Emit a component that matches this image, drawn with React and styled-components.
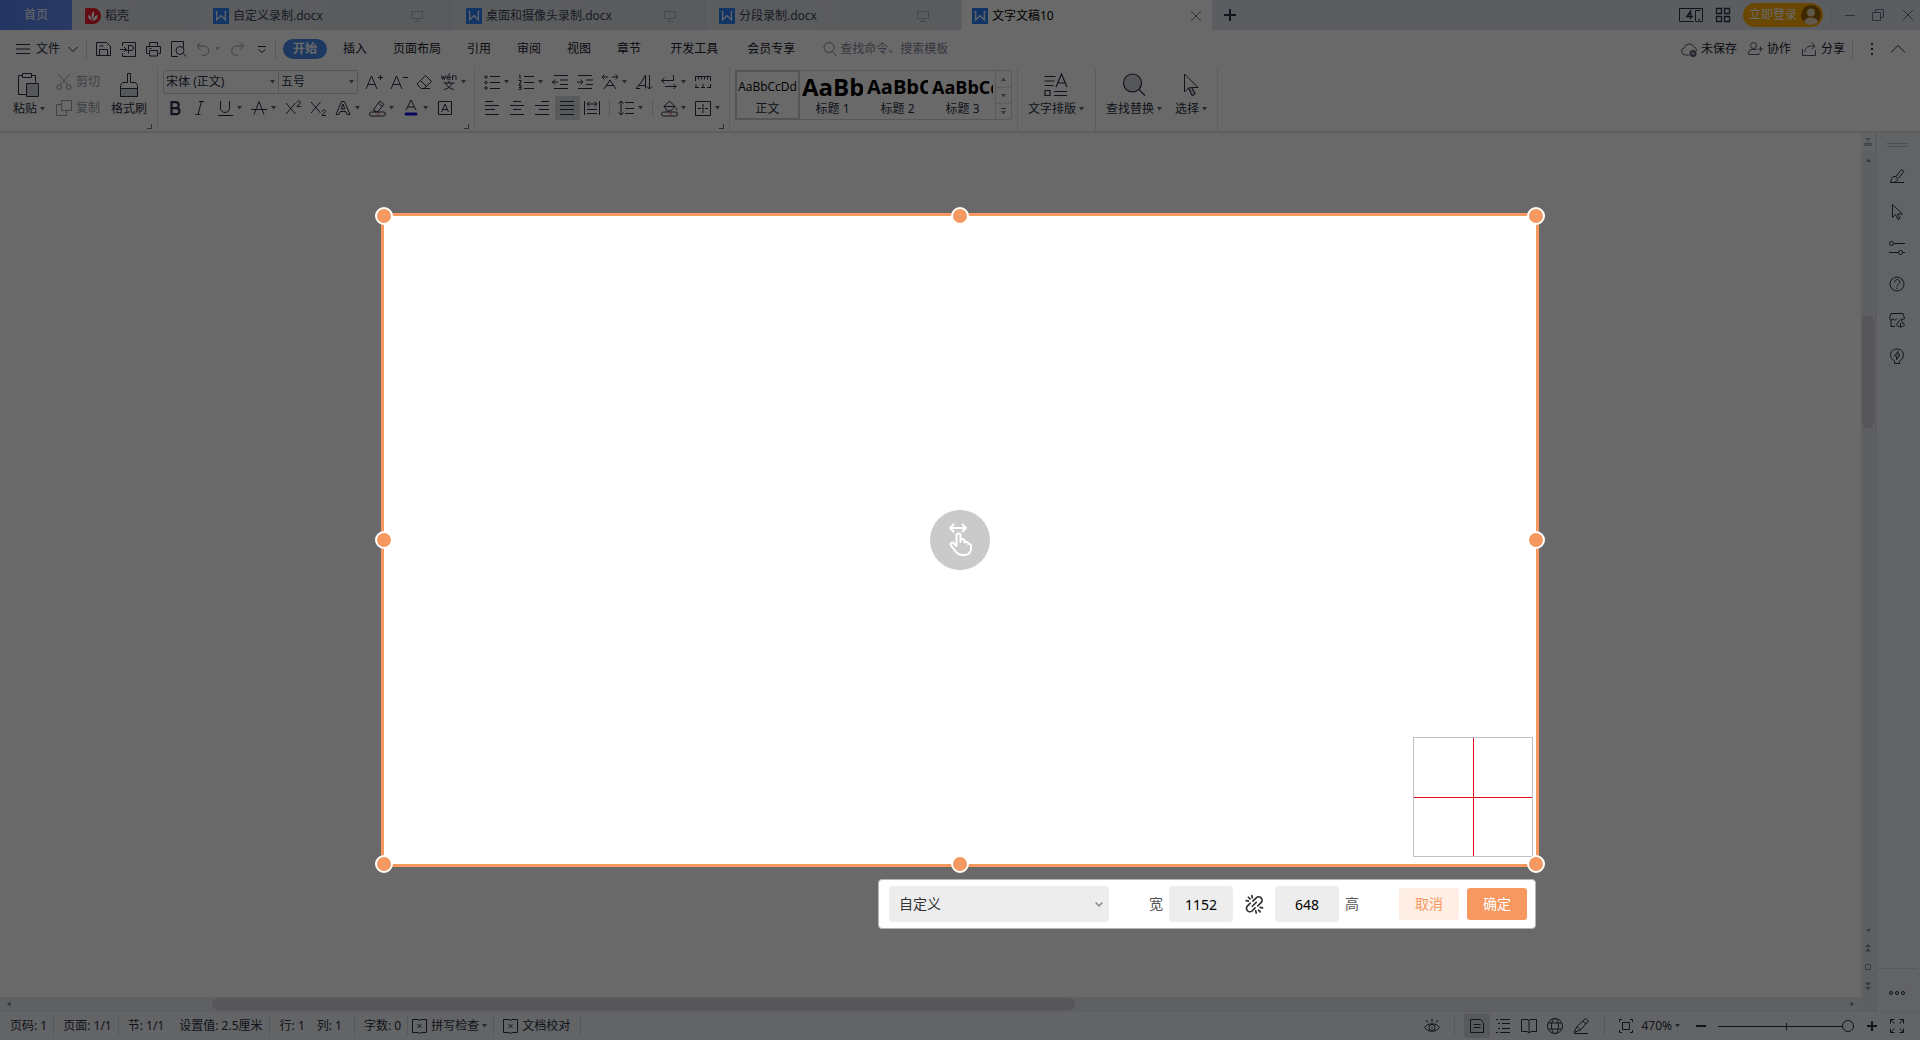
import React, { useState } from "react";
import styled, { createGlobalStyle, css } from "styled-components";

const ink = "#2b3145";
const faint = "#9a9ea8";
const accent = "#f79860";

const GlobalStyle = createGlobalStyle`
  *, *::before, *::after { box-sizing: border-box; }
  html, body, #root { height: 100%; }
  body { margin: 0; overflow: hidden; background: #fff; }
  body, button, input, select {
    font-family: "Noto Sans", "Noto Sans CJK SC", sans-serif;
    font-size: 12px;
    line-height: 16px;
    color: ${ink};
  }
  button { border: 0; padding: 0; margin: 0; background: none; white-space: nowrap; }
`;

/* ---------- icons ---------- */

const Svg = styled.svg`
  display: block;
  flex: none;
  overflow: visible;
  fill: none;
  stroke: currentColor;
  stroke-width: ${(p) => p.$weight || 1};
  stroke-linecap: butt;
  .solid { fill: currentColor; stroke: none; }
  .tint { fill: #cfd3da; }
`;

const shapes = {
  menu: <path d="M1 3.5h14M1 8h14M1 12.5h14" />,
  chevronDown: <path d="M3.5 6 8 10.5 12.5 6" />,
  chevronUp: <path d="M1 11.5 8 4.5 15 11.5" />,
  save: <path d="M1.5 1.5h10l4 4v9h-14zM4.500 14.500v-6h8v6M4.500 5h4" />,
  exportPdf: <path d="M2.500 5V1.500h13v14h-13V12M0 8.500h6M4 6l2.500 2.500L4 11M8.500 12.500V4.500H11a2.500 2.500 0 0 1 0 5H6.500" />,
  print: <path d="M4.500 5V1.500h8V5M3.500 12.500h-2v-7h14v7h-2M4.500 9.500h8v5.500h-8zM4.500 7.500h2" />,
  preview: <path d="M8 15.500H1.500v-15h12v6M13.500 12.500l2.500 3M14 9.500a4 4 0 1 1-8 0 4 4 0 0 1 8 0z" />,
  undo: <path d="M5.500 1.500 2 5l3.500 3.500M2 5h7a4.700 4.700 0 0 1 0 9.500H7" />,
  redo: <path d="M11 1.500 14.500 5 11 8.500M14.500 5h-7a4.700 4.700 0 0 0 0 9.500H9" />,
  more: <path d="M4 5.500h8M4.500 8.500 8 11.500l3.500-3" />,
  search: <path d="M12 6.500a5 5 0 1 1-10 0 5 5 0 0 1 10 0zM10.500 10.500l4.500 5" />,
  cloud: (
    <>
      <path d="M8 14H4.500A3.700 3.700 0 0 1 3.500 6.700 5 5 0 0 1 13 6a3.500 3.500 0 0 1 2.500 4" />
      <circle className="solid" cx="12" cy="12.500" r="3.500" />
      <path stroke="#fff" d="m10.700 11.200 2.600 2.600m0-2.600-2.600 2.600" />
    </>
  ),
  person: <path d="M9.500 4.500a3 3 0 1 1-6 0 3 3 0 0 1 6 0zM10 8.500H5a3.500 3.500 0 0 0-3.500 3.500v1.500H12V12M11 8h5M13.500 5.500v5" />,
  share: <path d="M1.500 8v6.500h13V9M4 11c0-4 2.500-6 7-6h2.500M10.500 1.500 14 5l-3.500 3.500" />,
  dots: <path className="solid" d="M7 2h2v2H7zM7 7h2v2H7zM7 12h2v2H7z" />,
  cut: <path d="M2.500.500 12 11M13.500.500 4 11M5.500 13a2.300 2.300 0 1 1-4.600 0 2.300 2.300 0 0 1 4.600 0zM15 13a2.300 2.300 0 1 1-4.600 0 2.300 2.300 0 0 1 4.600 0z" />,
  copy: <path d="M5.500.500h10v10h-10zM5.500 4.500h-5v11h10v-5" />,
  fontUp: <path d="M0 15 5.500 2 11 15M2 10.500h7M12 3.500h5M14.500 1v5" />,
  fontDown: <path d="M0 15 5.500 2 11 15M2 10.500h7M12 3.500h5" />,
  eraser: <path d="M1 10 9.500 1.500l6 6L8 14.500H5zM4.500 6.500l6 6M5 14.500h9" />,
  bold: <path strokeWidth="2.200" d="M4.500 2.200h4.200a3 3 0 0 1 0 6H4.500zM4.500 8.200h5a3 3 0 0 1 0 6h-5z" />,
  italic: <path d="M7 1.500h5M3.500 14.500h5M9.500 1.500 6 14.500" />,
  underline: <path d="M3.500 1v7a4.500 4.500 0 0 0 9 0V1M1 15.500h15" />,
  strike: <path d="M3 14.500 8 1.500l5 13M0 9.500h16" />,
  superscript: <path d="M1 3l9.500 11M10.500 3 1 14M12 2.500c0-2 3.500-2 3.500 0 0 1.500-3.500 2-3.500 4h4" />,
  subscript: <path d="M1 2l9.500 11M10.500 2 1 13M12 11.500c0-2 3.500-2 3.500 0 0 1.500-3.500 2-3.500 4h4" />,
  outlineA: <path d="M1 14.500 6.500 1.500h3L15 14.500h-3l-1.200-3H5.200l-1.200 3zM6.200 9l1.800-5 1.800 5z" />,
  highlighter: (
    <>
      <path d="M4.500 9.500 11 1l4 3.500-6.500 7.500H6zM9.500 3l4 3.500M7 11.500l-2-2" />
      <path d="M2.500 12h12a2 2 0 0 1 0 4h-12a2 2 0 0 1 0-4z" />
      <path stroke="#e0504a" d="m8 15.500 3-3.500" />
    </>
  ),
  fontColor: (
    <>
      <path d="M3 10 8 0l5 10M4.700 7h6.600" />
      <path stroke="#1313e8" strokeWidth="3" strokeLinecap="round" d="M3 14h10" />
    </>
  ),
  boxedA: <path d="M1.500 1.500h13v13h-13zM4.500 12 8 4l3.500 8M5.500 9.500h5" />,
  bullets: <path d="M6 2.500h10M6 8.500h10M6 14.500h10M3.200 3a1.200 1.200 0 1 1-2.400 0 1.200 1.200 0 0 1 2.400 0zM3.200 8.500a1.200 1.200 0 1 1-2.400 0 1.200 1.200 0 0 1 2.400 0zM3.200 14a1.200 1.200 0 1 1-2.400 0 1.200 1.200 0 0 1 2.400 0z" />,
  numbers: <path d="M6 2.500h10M6 8.500h10M6 14.500h10M1 1h1v4M.500 6.500H3v1.700L1 10h2M.500 11.500H3v4H.500M1 13.500h2" />,
  outdent: <path d="M2 1.500h14M8 6h8M8 10.500h8M2 14.500h14M0 8h6M3 5.500.500 8 3 10.500" />,
  indent: <path d="M1 1.500h14M9 6h7M9 10.500h7M1 14.500h14M0 8h6M3.500 5.500 6 8l-2.500 2.500" />,
  textScale: <path d="M0 3h6M10 3h6M2.500.500 0 3l2.500 2.500M13.500.500 16 3l-2.500 2.500M2 15l6-9 6 9M4.500 11.500h7" />,
  sort: <path d="M0 14.500 5.500 8 9.500 1v13.500M3 11.500h6.500M0 14.500h4M13.500 1v14M11 12.500l2.500 2.500 2.500-2.500" />,
  wrapMark: <path d="M12.500 1v5.500H1M3.500 3.500.500 6.500l3 3M4 12.500h11M12.500 10l2.500 2.500L12.500 15" />,
  tabRuler: <path d="M.500 7V2.500h15V7M3.500 2.500v3M6.500 2.500v3M9.500 2.500v3M12.500 2.500v3M1 14V10.500M0 13.500h4M6 13.500h4M8 10v3.500M12 13.500h4M15.500 10v3.500" />,
  alignLeft: <path d="M1 1.500h8M1 5.500h14M1 9.500h10M1 14.500h14" />,
  alignCenter: <path d="M4 1.500h8M1 5.500h14M4 9.500h8M1 14.500h14" />,
  alignRight: <path d="M7 1.500h8M1 5.500h14M5 9.500h10M1 14.500h14" />,
  justify: <path d="M1 1.500h14M1 5.500h14M1 9.500h14M1 14.500h14" />,
  distribute: <path d="M.500 1v14M15.500 1v14M3 4h10M5.500 1.500 3 4l2.500 2.500M10.500 1.500 13 4l-2.500 2.500M3 9.500h10M3 13.500h10" />,
  lineSpacing: <path d="M7 2.500h9M7 8.500h9M7 13.500h9M3 1v14M.500 3.500 3 1l2.500 2.500M.500 12.500 3 15l2.500-2.500" />,
  fill: (
    <>
      <path d="M3 6.500 8.500 1l5.500 5.500-4.500 4.500h-3zM3 6.500h11M15 7.500c1 2 1 2.500 0 3" />
      <path d="M2.500 12h12a2 2 0 0 1 0 4h-12a2 2 0 0 1 0-4z" />
      <path stroke="#e0504a" d="m8 15.500 3-3.500" />
    </>
  ),
  border: <path d="M.500 1.500h15v14H.500zM8 4v3M8 10v3M3 8.500h3M10 8.500h3M7 8.500h2M8 7.500v2" />,
  grid: <path strokeWidth="1.300" d="M1.500 1.500h5v5h-5zM9.500 1.500h5v5h-5zM1.500 9.500h5v5h-5zM9.500 9.500h5v5h-5z" />,
  minimize: <path d="M3 8.500h10" />,
  restore: <path d="M2.500 5.500h8v8h-8zM5.500 5V2.500h8v8H11" />,
  close: <path d="m3 3 10 10M13 3 3 13" />,
  plus: <path strokeWidth="2" d="M2 8h12M8 2v12" />,
  minus: <path strokeWidth="2" d="M3 8h10" />,
  plusSmall: <path strokeWidth="2" d="M3 8h10M8 3v10" />,
  monitor: <path d="M2.500 3.500h11v7h-11zM8 10.500v3M5 13.500h6" />,
  brush: <path d="M7 8.500 12.500 1.500l2.500 2L9.500 10M1 14.500c2-1 .500-5.500 4-6 3-.300 4.500 2.500 2.500 4.500s-4 1.500-6.500 1.500h14" />,
  cursor: <path d="M3.500.500v13l3-3 2.500 5 2-1-2.500-4.500h5z" />,
  sliders: <path d="M5 3.500h11M0 12.500h9M13.500 12.500H16M4.500 3.500a2 2 0 1 1-4 0 2 2 0 0 1 4 0zM13.500 12.500a2 2 0 1 1-4 0 2 2 0 0 1 4 0z" />,
  help: <path d="M15 8A7 7 0 1 1 1 8a7 7 0 0 1 14 0zM5.500 6.500C5.500 2.500 11 3 11 6c0 2-3 2-3 4.500M8 11.500v1.500" />,
  shop: <path d="M6 14.500H2V7M.500 6.500 2 1.500h12l1.500 5c0 1-2.500 1.500-3 0M.500 6.500c0 2 3 2 3.500 0 .500 2 3 2 4 0M13 6.500v1M11.500 15c-6-1-4-4-2.500-3.500 0-2 1.500-3 2.500-4 1 1 2 2 2 4 2.500-.500 3.500 2.500-2 3.500zM11.500 15v-4" />,
  idea: <path d="M5.500 15.500h5V13C17 9.500 15 1 8 1S-1 9.500 5.500 13zM9 3.500 5.500 8h2v3.500L11 7H9z" />,
  ellipsis: <path d="M3.500 8a1.500 1.500 0 1 1-3 0 1.500 1.500 0 0 1 3 0zM9.500 8a1.500 1.500 0 1 1-3 0 1.500 1.500 0 0 1 3 0zM15.500 8a1.500 1.500 0 1 1-3 0 1.500 1.500 0 0 1 3 0z" />,
  spell: <path d="M6 1.500H.500v13H6l1.500 1 1.500-1h5.500v-13H9l-1.500 1zM5.500 6l4 4M9.500 6l-4 4" />,
  eye: <path d="M.500 9.500C4 4.500 12 4.500 15.500 9.500 12 14.500 4 14.500.500 9.500zM11 9.500a3 3 0 1 1-6 0 3 3 0 0 1 6 0zM8.500 9.500a.500.500 0 1 1-1 0M8 1v3M2 2l2 2.500M14 2l-2 2.500" />,
  pageView: <path d="M1.500 1.500h10l3 3v10h-13zM4.500 6.500h7M4.500 9.500h7" />,
  outlineView: <path d="M1 1.500h2M5 1.500h10M3 5.500h2M7 5.500h8M3 10.500h2M7 10.500h8M1 14.500h2M5 14.500h10" />,
  bookView: <path d="M8 3 7 1.500H.500v12H6l2 1.500 2-1.500h5.500v-12H9zM8 3v12" />,
  globe: <path d="M15.500 8A7.500 7.500 0 1 1 .500 8a7.500 7.500 0 0 1 15 0zM11.500 8c0 4-1.500 7.500-3.500 7.500S4.500 12 4.500 8 6 .500 8 .500s3.500 3.500 3.500 7.500zM1.500 5h13M1.500 11h13" />,
  pen: <path d="M1 14.500 4 8.500 12.500.500l3 2.500-8 9zM4 8.500l3.500 3.500M1 15.500h14M10 3l3 3" />,
  fit: <path d="M4.500 4.500h7v7h-7zM1.500 4V1.500H4M12 1.500h2.500V4M14.500 12v2.500H12M4 14.500H1.500V12" />,
  fullscreen: <path d="M1.500 5.500v-4h4M1.500 1.500l4 4M10.500 1.500h4v4M14.500 1.500l-4 4M14.500 10.500v4h-4M14.500 14.500l-4-4M5.500 14.500h-4v-4M1.500 14.500l4-4" />,
  unlink: <path strokeWidth="1.500" strokeLinecap="round" d="M7 5.500 10 2.500a3 3 0 0 1 4.300 4.300l-3 3M9 11.500l-2.500 2.500a3 3 0 0 1-4.300-4.300l2.500-2.500M6.500 10l3.500-3.500M1 5l2 .500M3 2l1.500 1.500M6 .500l.500 2M15.500 11.500l-2-.500M13.500 15 12 13.500M10 16l-.500-2" />,
};

const Icon = ({ name, size = 16, weight }) => (
  <Svg width={size} height={size} viewBox="0 0 16 16" $weight={weight} aria-hidden="true">
    {shapes[name]}
  </Svg>
);

const turns = { down: 0, up: 180, left: 90, right: 270 };

const ArrowSvg = styled(Svg)`
  transform: rotate(${(p) => turns[p.$dir]}deg);
`;

const Arrow = ({ dir = "down" }) => (
  <ArrowSvg width="5" height="4" viewBox="0 0 5 4" $dir={dir} aria-hidden="true">
    <path className="solid" fillOpacity=".75" d="M0 0h5L2.500 3.500z" />
  </ArrowSvg>
);

const PinyinIcon = () => (
  <Svg width="16" height="16" viewBox="0 0 16 16" aria-hidden="true">
    <path d="M.500 1.500l1 4 1-3 1 3 1-4M6 3.500h3.500c0-2.500-3.500-2.500-3.500 0s2 2.500 3.500 1.500M7.500.500l1.500-1M11.500 6V1.500M11.500 3c1-2 3.500-2 3.500 0v3M2.500 9h11M8 7v2M4.500 9c2 4 5 6 8.500 6.500M11.500 9c-2 4-5 6-8.500 6.500" />
  </Svg>
);

const PasteIcon = () => (
  <Svg width="22" height="24" viewBox="0 0 22 24" aria-hidden="true">
    <path d="M8.500 21.500h-8v-19h4M13.500 2.500h4v7M4.500.500h9v4h-9z" />
    <path className="tint" d="M8.500 10.500h12v13h-12z" />
  </Svg>
);

const PainterIcon = () => (
  <Svg width="20" height="24" viewBox="0 0 20 24" aria-hidden="true">
    <path d="M8.500.500h3v9h5l2 3v11h-17v-11l2-3h5z" />
    <path className="tint" d="M1.500 15.500h17v8h-17z" />
  </Svg>
);

const LayoutIcon = () => (
  <Svg width="24" height="24" viewBox="0 0 24 24" $weight={1.2} aria-hidden="true">
    <path d="M.500 3.500h11M.500 8h10M.500 12.500h9M12 14 17.500 1 23 14M14 10h7M1 17.500h5v5H1zM10 18.500h13M10 22.500h13" />
  </Svg>
);

const FindIcon = () => (
  <Svg width="24" height="24" viewBox="0 0 24 24" $weight={1.2} aria-hidden="true">
    <path className="tint" d="M19.500 10a9 9 0 1 1-18 0 9 9 0 0 1 18 0z" />
    <path d="m17 16.500 6 6" />
  </Svg>
);

const PointerIcon = () => (
  <Svg width="24" height="24" viewBox="0 0 24 24" aria-hidden="true">
    <path d="M5.500 1v18l4-4 3.500 7.500 3-1.500-3-6.500h6z" />
    <path className="tint" d="m9.500 15 3.500 7.500 3-1.500-3-6.500z" />
  </Svg>
);

const WriterLogo = () => (
  <Svg width="16" height="16" viewBox="0 0 16 16" aria-hidden="true">
    <path fill="#2f80f5" stroke="none" d="M0 0h16v16H0z" />
    <path stroke="#fff" strokeWidth="1.200" d="M2.500 3.500h1.200v8.300L8 7.500l4.300 4.300V3.500h1.200" />
  </Svg>
);

const DocerLogo = () => (
  <Svg width="16" height="16" viewBox="0 0 16 16" aria-hidden="true">
    <path fill="#ee1c2e" stroke="none" d="M0 1.500A1.500 1.500 0 0 1 1.500 0H8a7.500 7.500 0 0 1 0 16H1.500A1.500 1.500 0 0 1 0 14.500z" />
    <path fill="#fff" stroke="none" d="M6.500 12.500C4 11.500 2.800 9.500 3 7c2.500.500 3.500 2.500 3.500 5.500zM7 11C6 8 6.500 5 8.500 3c1.500 3 .500 6-1.500 8zM7.500 13c0-3 2-5 5-6 .500 3-1.500 5.500-5 6z" />
  </Svg>
);

const ScreensIcon = () => (
  <Svg width="24" height="14" viewBox="0 0 24 14" aria-hidden="true">
    <path d="M14.500 13.500H.500V.500h23v13h-6M16.500 2.500h5M16.500 2.500v11h5M19 11.500h2" />
    <path strokeWidth="1.500" d="M11.500 11V3.500L8 8.500h6" />
  </Svg>
);

const AvatarIcon = () => (
  <Svg width="20" height="20" viewBox="0 0 20 20" aria-hidden="true">
    <circle cx="10" cy="10" r="10" fill="#9a6300" stroke="none" />
    <circle cx="10" cy="7.500" r="4" fill="#ead9b4" stroke="none" />
    <path d="M3 17c1-6 13-6 14 0-4 4-10 4-14 0z" fill="#ead9b4" stroke="none" />
  </Svg>
);

const DragIcon = () => (
  <Svg width="28" height="36" viewBox="-1 0 28 36" $weight={2} aria-hidden="true">
    <g strokeLinecap="round" strokeLinejoin="round">
      <path d="M3 6h16M6.500 2.500 3 6l3.500 3.500M15.500 2.500 19 6l-3.500 3.500" />
      <path d="M9.500 24V13.500a2 2 0 0 1 4 0V20v-2.200c1.500-1 3.500-.500 4 .700v2c1.500-1 3.200-.500 3.700.700v1c1.300-.600 2.600 0 2.800 1.300.500 5-.800 9.500-6.500 9.500-5.500.500-7.500-1.500-10.500-5.500-1.500-2-3-3.500-3.500-4.800-.500-1.500 1.700-2.700 3-1.700z" />
    </g>
  </Svg>
);

/* ---------- shell ---------- */

const Shell = styled.div`
  display: flex;
  flex-direction: column;
  height: 100vh;
`;

const Spacer = styled.div`
  flex: 1;
`;

const Divider = styled.span`
  flex: none;
  width: 1px;
  height: ${(p) => p.$h || 20}px;
  margin: 0 ${(p) => p.$gap || 0}px;
  background: #d6d8dc;
`;

/* ---------- title bar ---------- */

const TitleBar = styled.header`
  display: flex;
  height: 30px;
  gap: 3px;
  background: #dee2e9;
`;

const HomeTab = styled.button`
  width: 72px;
  color: #fff;
  background: linear-gradient(90deg, #5580ee, #648cf2);
`;

const Tab = styled.button`
  display: flex;
  align-items: center;
  gap: 4px;
  width: ${(p) => p.$w || 250}px;
  padding: 2px ${(p) => (p.$active ? 8 : 28)}px 0 10px;
  background: linear-gradient(90deg, #e0e2e6, #d7dbe1);
  color: #3c4358;
  svg:last-child:not(:first-child) { color: #a9b0be; }
  ${(p) =>
    p.$active &&
    css`
      background: #fff;
      color: #000;
      margin-right: -3px;
      svg:last-child:not(:first-child) { color: #747c90; }
    `}
`;

const TitleButton = styled.button`
  display: grid;
  place-items: center;
  width: ${(p) => p.$w}px;
  color: ${(p) => p.$color || ink};
`;

const LoginButton = styled.button`
  display: flex;
  align-items: center;
  align-self: center;
  gap: 4px;
  height: 24px;
  padding: 0 2px 0 6px;
  border-radius: 12px;
  background: #ffac00;
  color: #fff;
`;

const WindowTools = styled.div`
  display: flex;
  align-items: center;
`;

/* ---------- menu bar ---------- */

const MenuBar = styled.nav`
  display: flex;
  align-items: center;
  height: 38px;
  padding-right: 8px;
`;

const FileButton = styled.button`
  display: flex;
  align-items: center;
  gap: 5px;
  padding: 0 1px 0 15px;
`;

const MenuItem = styled.button`
  padding: 0 13px 0 ${(p) => (p.$wide ? 16 : 13)}px;
  color: #1d2130;
`;

const ActiveItem = styled.button`
  height: 20px;
  margin: 0 3px 0 7px;
  padding: 0 10px;
  border-radius: 10px;
  background: #478bec;
  color: #fff;
  font-weight: 700;
`;

const SearchBox = styled.label`
  display: flex;
  align-items: center;
  gap: 2px;
  margin-left: 14px;
  color: #7f8699;
`;

const SearchInput = styled.input`
  width: 140px;
  padding: 0;
  border: 0;
  outline: 0;
  background: none;
  &::placeholder { color: #7f8699; opacity: 1; }
`;

const MenuAction = styled.button`
  display: flex;
  align-items: center;
  gap: 4px;
  margin-left: 10px;
  color: #1d2130;
  svg { color: #555c72; }
`;

/* ---------- ribbon ---------- */

const RibbonBar = styled.div`
  display: flex;
  height: 65px;
  border-bottom: 2px solid #e4e5e8;
`;

const Group = styled.section`
  display: flex;
  position: relative;
  padding: 1px ${(p) => p.$right || 0}px 0 ${(p) => p.$left || 0}px;
  border-right: 1px solid #e3e4e7;
`;

const Launcher = styled.button`
  position: absolute;
  right: 5px;
  bottom: 2px;
  width: 5px;
  height: 5px;
  border-right: 1px solid #6b7288;
  border-bottom: 1px solid #6b7288;
`;

const Rows = styled.div`
  display: grid;
  grid-template-rows: 26px 26px;
  align-content: start;
  padding: 0 ${(p) => p.$pad || 0}px;
`;

const Row = styled.div`
  display: flex;
  align-items: center;
`;

const Tool = styled.button`
  display: flex;
  align-items: center;
  gap: 4px;
  flex: none;
  width: ${(p) => (p.$drop ? 34 : 25)}px;
  height: 24px;
  padding-left: 4px;
  border-radius: 2px;
  background: ${(p) => (p.$on ? "#d5d7dc" : "none")};
  color: ${(p) => (p.$off ? faint : ink)};
`;

const ToolButton = ({ icon, label, drop, on, off, children }) => (
  <Tool aria-label={label} $drop={drop} $on={on} $off={off}>
    {children || <Icon name={icon} />}
    {drop && <Arrow />}
  </Tool>
);

const BigTool = styled.button`
  display: flex;
  flex-direction: column;
  align-items: center;
  gap: 4px;
  height: 52px;
  padding: 4px ${(p) => p.$pad || 0}px 0;
  color: ${ink};
`;

const BigLabel = styled.span`
  display: flex;
  align-items: center;
  gap: 3px;
`;

const TextTool = styled.button`
  display: flex;
  align-items: center;
  gap: 4px;
  color: ${faint};
`;

const Combos = styled.div`
  display: flex;
  height: 24px;
  border: 1px solid #d0d2d7;
  border-radius: 2px;
  margin-right: 4px;
`;

const ComboBox = styled.span`
  display: grid;
  align-items: center;
  width: ${(p) => p.$w}px;
  & + & { border-left: 1px solid #d0d2d7; }
  > * { grid-area: 1 / 1; }
  > svg { justify-self: end; margin-right: 3px; pointer-events: none; }
`;

const ComboSelect = styled.select`
  appearance: none;
  width: 100%;
  height: 22px;
  padding: 0 12px 0 2px;
  border: 0;
  background: none;
`;

const Gallery = styled.div`
  display: flex;
  height: 50px;
  margin-top: 1px;
  border: 1px solid #d4d6da;
  border-radius: 2px;
`;

const StyleCard = styled.button`
  display: grid;
  grid-template-rows: 1fr 16px;
  width: 65px;
  border: 2px solid ${(p) => (p.$on ? "#c9cbcf" : "transparent")};
  margin: ${(p) => (p.$on ? "-1px 0 -1px -1px" : "0")};
  padding: ${(p) => (p.$on ? 1 : 0)}px 0;
  overflow: hidden;
`;

const Sample = styled.span`
  display: flex;
  align-items: center;
  justify-content: ${(p) => (p.$size > 12 ? "flex-start" : "center")};
  min-width: 0;
  overflow: hidden;
  font-family: "Open Sans", "Noto Sans", sans-serif;
  font-size: ${(p) => p.$size}px;
  font-weight: ${(p) => (p.$size > 12 ? 700 : 400)};
  line-height: 28px;
  color: #000;
`;

const GalleryScroll = styled.div`
  display: grid;
  grid-template-rows: repeat(3, 16px);
  width: 16px;
  border-left: 1px solid #dfe0e4;
`;

const GalleryStep = styled.button`
  display: grid;
  place-content: center;
  gap: 2px;
  color: #555c72;
  & + & { border-top: 1px solid #dfe0e4; }
  &:last-child::before { content: ""; width: 5px; height: 1px; background: currentColor; }
`;

/* ---------- workspace ---------- */

const Workspace = styled.main`
  display: grid;
  grid-template-columns: 1fr 14px 45px;
  grid-template-rows: 1fr 14px;
  flex: 1;
  min-height: 0;
`;

const Page = styled.div`
  background: #fff;
`;

const VScroll = styled.div`
  grid-row: 1 / 3;
  grid-column: 2;
  display: flex;
  flex-direction: column;
  align-items: center;
  background: #e4e7ec;
  color: #6d7792;
`;

const ScrollCap = styled.button`
  display: grid;
  place-items: center;
  width: 14px;
  height: ${(p) => p.$h}px;
  color: ${(p) => (p.$light ? "#949cae" : "inherit")};
  background: ${(p) => (p.$light ? "#f1f3f6" : "none")};
`;

const VThumb = styled.div`
  width: 12px;
  height: 113px;
  margin-top: 147px;
  border-radius: 6px;
  background: #d0d2d6;
`;

const HScroll = styled.div`
  grid-row: 2;
  grid-column: 1;
  display: flex;
  align-items: center;
  padding: 0 6px;
  background: #e6e9ee;
  color: #555f7a;
`;

const HThumb = styled.div`
  width: 46.7%;
  height: 12px;
  margin-left: 201px;
  border-radius: 6px;
  background: #d0d2d6;
`;

const SideRail = styled.aside`
  grid-row: 1 / 3;
  grid-column: 3;
  display: flex;
  flex-direction: column;
  align-items: center;
  padding-right: 3px;
  border-left: 2px solid #dcdfe5;
  background: #eff1f5;
`;

const Grip = styled.div`
  width: 20px;
  height: 4px;
  margin: 10px 0 11px;
  border: solid #b4b8c0;
  border-width: 1px 0;
`;

const RailButton = styled.button`
  display: grid;
  place-items: center;
  width: 100%;
  height: 36px;
  color: ${ink};
`;

const RailMore = styled(RailButton)`
  height: 43px;
  padding-top: 6px;
  border-top: 1px solid #d6d9de;
`;

/* ---------- status bar ---------- */

const StatusBar = styled.footer`
  display: flex;
  align-items: center;
  height: 29px;
  padding: 0 10px;
  border-top: 1px solid #e0e2e6;
  background: #f1f3f6;
`;

const StatusText = styled.span`
  padding: 0 ${(p) => p.$r || 6}px 0 ${(p) => p.$l || 0}px;
  white-space: nowrap;
`;

const StatusButton = styled.button`
  display: flex;
  align-items: center;
  gap: 3px;
  padding: 0 ${(p) => p.$r}px 0 ${(p) => p.$l}px;
`;

const ViewButton = styled.button`
  display: grid;
  place-items: center;
  width: ${(p) => p.$w || 26}px;
  height: 24px;
  border-radius: 2px;
  background: ${(p) => (p.$on ? "#d5d7dc" : "none")};
`;

const Zoom = styled.input`
  appearance: none;
  width: 136px;
  height: 14px;
  margin: 0 6px;
  background:
    linear-gradient(${ink}, ${ink}) center / 1px 7px no-repeat,
    linear-gradient(${ink}, ${ink}) center / 100% 1px no-repeat;
  &::-webkit-slider-thumb {
    appearance: none;
    width: 12px;
    height: 12px;
    border: 1px solid ${ink};
    border-radius: 50%;
    background: #f1f3f6;
  }
`;

/* ---------- capture overlay ---------- */

const Overlay = styled.div`
  position: fixed;
  inset: 0;
  overflow: hidden;
`;

const Selection = styled.div`
  position: absolute;
  top: 216px;
  left: 20%;
  width: 60%;
  height: 648px;
  background: #fff;
  box-shadow: 0 0 0 3px ${accent}, 0 0 0 4000px rgba(0, 0, 0, 0.59);
`;

const Handle = styled.button`
  position: absolute;
  left: ${(p) => p.$x}%;
  top: ${(p) => p.$y}%;
  width: 18px;
  height: 18px;
  margin: -9px;
  border: 2px solid #fff;
  border-radius: 50%;
  background: ${accent};
`;

const MoveButton = styled.button`
  position: absolute;
  inset: 0;
  display: grid;
  place-items: center;
  width: 60px;
  height: 60px;
  margin: auto;
  border-radius: 50%;
  background: #cacaca;
  color: #fff;
`;

const Loupe = styled.div`
  position: absolute;
  right: 3px;
  bottom: 7px;
  width: 120px;
  height: 120px;
  border: 1px solid #c0c0c0;
  background:
    linear-gradient(#e00b1c, #e00b1c) 59px 0 / 1px 100% no-repeat,
    linear-gradient(#e00b1c, #e00b1c) 0 59px / 100% 1px no-repeat,
    #fff;
`;

const SizePanel = styled.form`
  position: absolute;
  top: calc(100% + 15px);
  right: 0;
  display: flex;
  align-items: center;
  height: 50px;
  padding: 0 8px 0 10px;
  border: 1px solid #b4b4b4;
  border-radius: 4px;
  background: #fff;
`;

const PresetBox = styled.span`
  display: grid;
  align-items: center;
  margin-right: 40px;
  > * { grid-area: 1 / 1; }
  > svg { justify-self: end; margin-right: 4px; color: #8a8a8a; pointer-events: none; }
`;

const Preset = styled.select`
  appearance: none;
  width: 220px;
  height: 36px;
  padding: 0 10px;
  border: 0;
  border-radius: 4px;
  background: #ededed;
  color: #333;
  font-size: 14px;
`;

const SizeLabel = styled.label`
  color: #555;
  font-size: 14px;
`;

const SizeInput = styled.input`
  width: 64px;
  height: 36px;
  margin: 0 ${(p) => (p.$end ? 6 : 0)}px 0 ${(p) => (p.$end ? 0 : 6)}px;
  padding: 0;
  border: 0;
  border-radius: 4px;
  background: #ededed;
  color: #000;
  font-size: 14px;
  text-align: center;
`;

const LinkToggle = styled.button`
  display: grid;
  place-items: center;
  width: 42px;
  height: 36px;
  color: #333;
`;

const PanelButton = styled.button`
  width: 60px;
  height: 32px;
  margin-left: ${(p) => (p.$primary ? 8 : 40)}px;
  border-radius: 3px;
  background: ${(p) => (p.$primary ? accent : "#feeee4")};
  color: ${(p) => (p.$primary ? "#fff" : accent)};
  font-size: 14px;
`;

const handles = [
  ["左上", 0, 0], ["上", 50, 0], ["右上", 100, 0], ["左", 0, 50],
  ["右", 100, 50], ["左下", 0, 100], ["下", 50, 100], ["右下", 100, 100],
];

const CaptureOverlay = () => {
  const [width, setWidth] = useState("1152");
  const [height, setHeight] = useState("648");
  return (
    <Overlay>
      <Selection>
        <MoveButton aria-label="移动"><DragIcon /></MoveButton>
        <Loupe />
        {handles.map(([label, x, y]) => (
          <Handle key={label} aria-label={label} $x={x} $y={y} />
        ))}
        <SizePanel onSubmit={(e) => e.preventDefault()}>
          <PresetBox>
            <Preset aria-label="尺寸">
              <option>自定义</option>
            </Preset>
            <Icon name="chevronDown" size={12} weight={2} />
          </PresetBox>
          <SizeLabel htmlFor="w">宽</SizeLabel>
          <SizeInput id="w" value={width} onChange={(e) => setWidth(e.target.value)} />
          <LinkToggle type="button" aria-label="锁定比例"><Icon name="unlink" size={18} /></LinkToggle>
          <SizeInput id="h" $end value={height} onChange={(e) => setHeight(e.target.value)} />
          <SizeLabel htmlFor="h">高</SizeLabel>
          <PanelButton type="button">取消</PanelButton>
          <PanelButton type="submit" $primary>确定</PanelButton>
        </SizePanel>
      </Selection>
    </Overlay>
  );
};

const documents = ["自定义录制.docx", "桌面和摄像头录制.docx", "分段录制.docx"];

const Title = () => (
  <TitleBar>
    <HomeTab>首页</HomeTab>
    <Tab $w={125}><DocerLogo />稻壳</Tab>
    {documents.map((name) => (
      <Tab key={name}><WriterLogo />{name}<Spacer /><Icon name="monitor" /></Tab>
    ))}
    <Tab $active><WriterLogo />文字文稿10<Spacer /><Icon name="close" /></Tab>
    <TitleButton $w={36} aria-label="新建"><Icon name="plus" /></TitleButton>
    <Spacer />
    <WindowTools>
      <TitleButton $w={24} aria-label="多屏"><ScreensIcon /></TitleButton>
      <TitleButton $w={40} aria-label="应用"><Icon name="grid" /></TitleButton>
      <LoginButton>立即登录<AvatarIcon /></LoginButton>
      <Divider $gap={8} />
      <TitleButton $w={20} $color="#6b7390" aria-label="最小化"><Icon name="minimize" /></TitleButton>
      <TitleButton $w={36} $color="#6b7390" aria-label="还原"><Icon name="restore" /></TitleButton>
      <TitleButton $w={24} $color="#6b7390" aria-label="关闭"><Icon name="close" /></TitleButton>
    </WindowTools>
  </TitleBar>
);

const Menu = () => (
  <MenuBar>
    <FileButton><Icon name="menu" />文件<Icon name="chevronDown" /></FileButton>
    <Divider $gap={4} />
    <ToolButton icon="save" label="保存" />
    <ToolButton icon="exportPdf" label="输出为PDF" />
    <ToolButton icon="print" label="打印" />
    <ToolButton icon="preview" label="打印预览" />
    <ToolButton icon="undo" label="撤销" drop off />
    <ToolButton icon="redo" label="恢复" off />
    <ToolButton icon="more" label="更多" />
    <Divider />
    <ActiveItem>开始</ActiveItem>
    {["插入", "页面布局", "引用", "审阅", "视图", "章节"].map((t) => (
      <MenuItem key={t}>{t}</MenuItem>
    ))}
    <MenuItem $wide>开发工具</MenuItem>
    <MenuItem $wide>会员专享</MenuItem>
    <SearchBox>
      <Icon name="search" />
      <SearchInput placeholder="查找命令、搜索模板" />
    </SearchBox>
    <Spacer />
    <MenuAction><Icon name="cloud" />未保存</MenuAction>
    <MenuAction><Icon name="person" />协作</MenuAction>
    <MenuAction><Icon name="share" />分享</MenuAction>
    <Divider $gap={7} />
    <TitleButton $w={24} aria-label="选项"><Icon name="dots" /></TitleButton>
    <TitleButton $w={28} aria-label="收起功能区"><Icon name="chevronUp" /></TitleButton>
  </MenuBar>
);

const Ribbon = () => (
  <RibbonBar>
    <Group $left={13} $right={10}>
      <BigTool><PasteIcon /><BigLabel>粘贴<Arrow /></BigLabel></BigTool>
      <Rows $pad={11}>
        <TextTool><Icon name="cut" />剪切</TextTool>
        <TextTool><Icon name="copy" />复制</TextTool>
      </Rows>
      <BigTool><PainterIcon /><BigLabel>格式刷</BigLabel></BigTool>
      <Launcher aria-label="剪贴板选项" />
    </Group>
    <Group $left={5} $right={3}>
      <Rows>
        <Row>
          <Combos>
            <ComboBox $w={114}>
              <ComboSelect aria-label="字体"><option>宋体 (正文)</option></ComboSelect>
              <Arrow />
            </ComboBox>
            <ComboBox $w={79}>
              <ComboSelect aria-label="字号"><option>五号</option></ComboSelect>
              <Arrow />
            </ComboBox>
          </Combos>
          <ToolButton icon="fontUp" label="增大字号" />
          <ToolButton icon="fontDown" label="减小字号" />
          <ToolButton icon="eraser" label="清除格式" />
          <ToolButton label="拼音指南" drop><PinyinIcon /></ToolButton>
        </Row>
        <Row>
          <ToolButton icon="bold" label="加粗" />
          <ToolButton icon="italic" label="倾斜" />
          <ToolButton icon="underline" label="下划线" drop />
          <ToolButton icon="strike" label="删除线" drop />
          <ToolButton icon="superscript" label="上标" />
          <ToolButton icon="subscript" label="下标" />
          <ToolButton icon="outlineA" label="文字效果" drop />
          <ToolButton icon="highlighter" label="突出显示" drop />
          <ToolButton icon="fontColor" label="字体颜色" drop />
          <ToolButton icon="boxedA" label="字符底纹" />
        </Row>
      </Rows>
      <Launcher aria-label="字体选项" />
    </Group>
    <Group $left={5} $right={4}>
      <Rows>
        <Row>
          <ToolButton icon="bullets" label="项目符号" drop />
          <ToolButton icon="numbers" label="编号" drop />
          <ToolButton icon="outdent" label="减少缩进" />
          <ToolButton icon="indent" label="增加缩进" />
          <ToolButton icon="textScale" label="中文版式" drop />
          <ToolButton icon="sort" label="排序" />
          <ToolButton icon="wrapMark" label="段落标记" drop />
          <ToolButton icon="tabRuler" label="制表位" />
        </Row>
        <Row>
          <ToolButton icon="alignLeft" label="左对齐" />
          <ToolButton icon="alignCenter" label="居中" />
          <ToolButton icon="alignRight" label="右对齐" />
          <ToolButton icon="justify" label="两端对齐" on />
          <ToolButton icon="distribute" label="分散对齐" />
          <Divider $gap={4} $h={18} />
          <ToolButton icon="lineSpacing" label="行距" drop />
          <Divider $gap={4} $h={18} />
          <ToolButton icon="fill" label="底纹" drop />
          <ToolButton icon="border" label="边框" drop />
        </Row>
      </Rows>
      <Launcher aria-label="段落选项" />
    </Group>
    <Group $left={5} $right={5}>
      <Gallery>
        <StyleCard $on><Sample $size={12}>AaBbCcDd</Sample>正文</StyleCard>
        <StyleCard><Sample $size={24}>AaBb</Sample>标题 1</StyleCard>
        <StyleCard><Sample $size={20}>AaBbC</Sample>标题 2</StyleCard>
        <StyleCard><Sample $size={18}>AaBbCc</Sample>标题 3</StyleCard>
        <GalleryScroll>
          <GalleryStep aria-label="上一行"><Arrow dir="up" /></GalleryStep>
          <GalleryStep aria-label="下一行"><Arrow /></GalleryStep>
          <GalleryStep aria-label="展开"><Arrow /></GalleryStep>
        </GalleryScroll>
      </Gallery>
    </Group>
    <Group $right={1}>
      <BigTool $pad={10}><LayoutIcon /><BigLabel>文字排版<Arrow /></BigLabel></BigTool>
    </Group>
    <Group $right={7}>
      <BigTool $pad={10}><FindIcon /><BigLabel>查找替换<Arrow /></BigLabel></BigTool>
      <BigTool $pad={3}><PointerIcon /><BigLabel>选择<Arrow /></BigLabel></BigTool>
    </Group>
  </RibbonBar>
);

const railIcons = [
  ["brush", "样式"], ["cursor", "选择"], ["sliders", "属性"],
  ["help", "帮助"], ["shop", "素材"], ["idea", "灵感"],
];

const MarkIcon = ({ d }) => (
  <Svg width="10" height="10" viewBox="0 0 10 10" aria-hidden="true">
    <path className="solid" fillOpacity=".8" fillRule="evenodd" d={d} />
  </Svg>
);

const Editor = () => (
  <Workspace>
    <Page />
    <HScroll>
      <Arrow dir="left" />
      <HThumb />
      <Spacer />
      <Arrow dir="right" />
    </HScroll>
    <VScroll>
      <ScrollCap $h={18} $light aria-label="标尺"><MarkIcon d="M2 1h6L5 4zM4.500 4h1v2h-1zM1 6h8v3H1zM3 7v1h1V7zM6 7v1h1V7z" /></ScrollCap>
      <ScrollCap $h={17} aria-label="向上"><Arrow dir="up" /></ScrollCap>
      <VThumb />
      <Spacer />
      <ScrollCap $h={16} aria-label="向下"><Arrow /></ScrollCap>
      <ScrollCap $h={18} aria-label="上一页"><MarkIcon d="M5 1l3 3H2zM5 5l3 3.500H2z" /></ScrollCap>
      <ScrollCap $h={19} aria-label="选择浏览对象"><MarkIcon d="M3 2h4l1 1v4l-1 1H3L2 7V3zM3 3v4h4V3z" /></ScrollCap>
      <ScrollCap $h={19} aria-label="下一页"><MarkIcon d="M5 5l3-3.500H2zM5 9l3-3H2z" /></ScrollCap>
      <ScrollCap as="span" $h={16} />
    </VScroll>
    <SideRail>
      <Grip />
      {railIcons.map(([name, label]) => (
        <RailButton key={name} aria-label={label}><Icon name={name} /></RailButton>
      ))}
      <Spacer />
      <RailMore aria-label="更多"><Icon name="ellipsis" /></RailMore>
    </SideRail>
  </Workspace>
);

const Status = () => (
  <StatusBar>
    <StatusText>页码: 1</StatusText>
    <Divider />
    <StatusText $l={9}>页面: 1/1</StatusText>
    <Divider />
    <StatusText $l={9} $r={15}>节: 1/1</StatusText>
    <StatusText>设置值: 2.5厘米</StatusText>
    <Divider />
    <StatusText $l={10} $r={12}>行: 1</StatusText>
    <StatusText $r={12}>列: 1</StatusText>
    <Divider />
    <StatusText $l={9}>字数: 0</StatusText>
    <Divider />
    <StatusButton $l={4} $r={6}><Icon name="spell" />拼写检查<Arrow /></StatusButton>
    <Divider />
    <StatusButton $l={9} $r={10}><Icon name="spell" />文档校对</StatusButton>
    <Divider />
    <Spacer />
    <ViewButton aria-label="护眼模式"><Icon name="eye" /></ViewButton>
    <Divider $gap={9} />
    <ViewButton $on aria-label="页面视图"><Icon name="pageView" /></ViewButton>
    <ViewButton aria-label="大纲"><Icon name="outlineView" /></ViewButton>
    <ViewButton aria-label="阅读版式"><Icon name="bookView" /></ViewButton>
    <ViewButton aria-label="Web版式"><Icon name="globe" /></ViewButton>
    <ViewButton aria-label="写作模式"><Icon name="pen" /></ViewButton>
    <Divider $gap={10} />
    <ViewButton $w={22} aria-label="适合页面"><Icon name="fit" /></ViewButton>
    <StatusButton $l={4} $r={10}>470%<Arrow /></StatusButton>
    <ViewButton $w={22} aria-label="缩小"><Icon name="minus" /></ViewButton>
    <Zoom type="range" aria-label="显示比例" min="0" max="100" defaultValue="100" />
    <ViewButton $w={24} aria-label="放大"><Icon name="plusSmall" /></ViewButton>
    <ViewButton aria-label="全屏"><Icon name="fullscreen" /></ViewButton>
  </StatusBar>
);

export default function App() {
  return (
    <>
      <GlobalStyle />
      <Shell>
        <Title />
        <Menu />
        <Ribbon />
        <Editor />
        <Status />
      </Shell>
      <CaptureOverlay />
    </>
  );
}
